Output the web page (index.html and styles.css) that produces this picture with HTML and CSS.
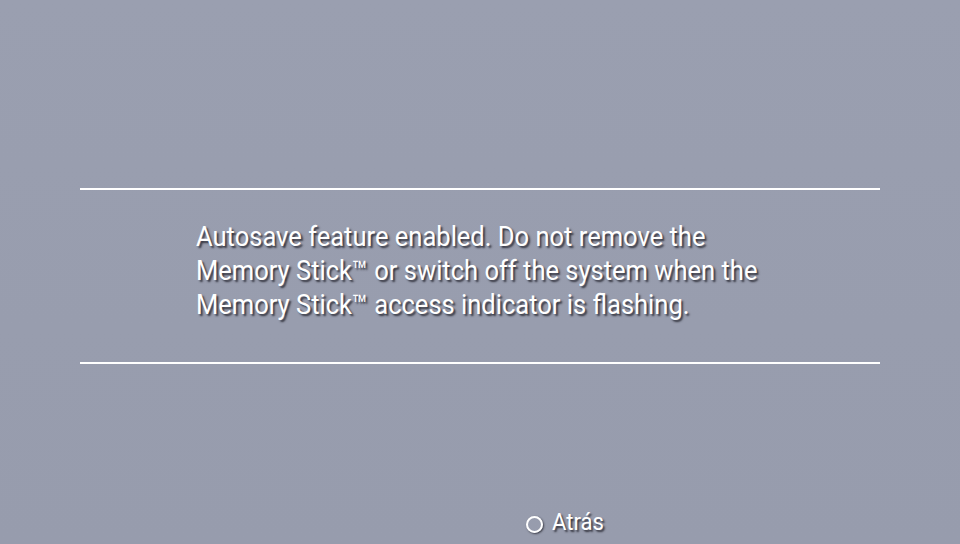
FILE: index.html
```html
<!DOCTYPE html>
<html>
<head>
<meta charset="utf-8">
<link rel="stylesheet" href="styles.css">
</head>
<body>
<div class="screen">
  <div class="dialog">
    <div class="rule"></div>
    <div class="message">
      <p class="text">Autosave feature enabled. Do not remove the<br>Memory Stick™ or switch off the system when the<br>Memory Stick™ access indicator is flashing.</p>
    </div>
    <div class="rule"></div>
  </div>
  <div class="footer">
    <span class="circle"></span>
    <span class="label">Atrás</span>
  </div>
</div>
</body>
</html>
```
FILE: styles.css
```css
html, body {
  margin: 0;
  padding: 0;
}
body {
  width: 960px;
  height: 544px;
  overflow: hidden;
  background: #999eb0;
  font-family: Roboto, "Liberation Sans", sans-serif;
  color: #ffffff;
}
.screen {
  width: 960px;
  height: 544px;
  display: flex;
  flex-direction: column;
  background: linear-gradient(180deg, #9a9fb0 0%, #989dae 60%, #979cad 100%);
}
.dialog {
  margin-top: 188px;
  padding: 0 80px;
  display: flex;
  flex-direction: column;
}
.rule {
  height: 2px;
  background: #ffffff;
}
.message {
  height: 172px;
  padding-left: 116px;
  box-sizing: border-box;
  padding-top: 30px;
}
.text {
  margin: 0;
  font-size: 27px;
  line-height: 34px;
  display: inline-block;
  white-space: nowrap;
  transform: scaleX(0.945);
  transform-origin: left top;
  text-shadow: 2px 2px 2px rgba(35, 35, 45, 0.85);
}
.footer {
  margin-top: auto;
  height: 40px;
  display: flex;
  align-items: center;
  padding-left: 526px;
  gap: 9px;
}
.circle {
  width: 13px;
  height: 13px;
  border: 2px solid #ffffff;
  border-radius: 50%;
  box-shadow: 1px 1px 2px rgba(35, 35, 45, 0.8);
  margin-top: 1px;
}
.label {
  font-size: 24px;
  display: inline-block;
  transform: scaleX(0.92);
  transform-origin: left center;
  text-shadow: 2px 2px 2px rgba(35, 35, 45, 0.85);
  margin-top: -4px;
}
```
